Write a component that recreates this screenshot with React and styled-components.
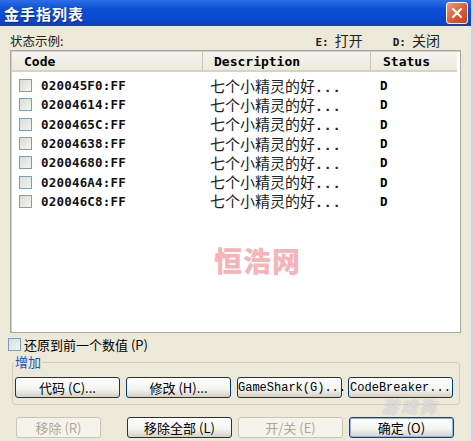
import React from 'react';
import styled, { createGlobalStyle } from 'styled-components';

const Global = createGlobalStyle`
  html, body { margin: 0; padding: 0; background: #ece9d8; }
  * { box-sizing: border-box; }
`;

const Window = styled.div`
  width: 474px;
  height: 441px;
  background: #ece9d8;
  font-family: "Noto Sans CJK SC", "DejaVu Sans", sans-serif;
  font-size: 12px;
  color: #000;
  display: flex;
  flex-direction: column;
  position: relative;
  overflow: hidden;
  border-right: 3px solid #c5d3ee;
`;

const TitleBar = styled.div`
  height: 26px;
  flex: none;
  background: linear-gradient(180deg, #2e6fe6 0%, #0b4fd6 35%, #0a49cf 75%, #0b3fb4 100%);
  display: flex;
  align-items: center;
  justify-content: space-between;
  padding: 0 3px 0 4px;
`;

const Title = styled.span`
  color: #fff;
  font-weight: bold;
  font-size: 15px;
  letter-spacing: 1px;
  text-shadow: 1px 1px 0 #0a2a8a;
`;

const Close = styled.div`
  width: 22px;
  height: 22px;
  border-radius: 3px;
  border: 1px solid #fff;
  background: linear-gradient(135deg, #f09a7c, #d9572f 60%, #c4431f);
  display: flex;
  align-items: center;
  justify-content: center;
`;

const Body = styled.div`
  flex: 1;
  display: flex;
  flex-direction: column;
  padding: 4px 9px 0 8px;
`;

const Legend = styled.div`
  display: flex;
  align-items: baseline;
  height: 20px;
  padding-left: 2px;
  color: #222;
  font-size: 12.5px;
  line-height: 20px;
`;

const LegendItem = styled.span`
  margin-left: ${p => p.$gap}px;
  display: inline-flex;
  align-items: baseline;
  gap: 6px;
  font-size: 14px;
  b { font-family: "DejaVu Sans Mono", monospace; font-size: 11px; }
`;

const ListBox = styled.div`
  height: 283px;
  margin: 0 1px 0 2px;
  background: #fff;
  border: 1px solid #a9a89f;
  box-shadow: inset 1px 1px 0 #d0cfc6;
  display: flex;
  flex-direction: column;
  padding: 1px 3px 0 1px;
`;

const Header = styled.div`
  display: grid;
  grid-template-columns: 191px 168px 1fr;
  height: 20px;
  background: linear-gradient(180deg, #f5f4ee, #ebeadb);
  border-bottom: 2px solid #d6d3c4;
  font-family: "DejaVu Sans Mono", monospace;
  font-weight: bold;
  font-size: 13px;
`;

const HeadCell = styled.div`
  display: flex;
  align-items: center;
  padding-left: ${p => p.$pad}px;
  border-right: ${p => (p.$last ? 'none' : '1px solid #c9c6b6')};
`;

const Rows = styled.div`
  padding-top: 4px;
  display: flex;
  flex-direction: column;
`;

const Row = styled.div`
  display: grid;
  grid-template-columns: 191px 168px 1fr;
  height: 19.3px;
  align-items: center;
`;

const CodeCell = styled.div`
  display: flex;
  align-items: center;
  padding-left: 7px;
  gap: 9px;
  font-family: "DejaVu Sans Mono", monospace;
  font-weight: bold;
  font-size: 12.5px;
  color: #111;
  letter-spacing: 0.2px;
`;

const Box = styled.span`
  width: 13px;
  height: 13px;
  flex: none;
  border: 1px solid #7f9db9;
  background: linear-gradient(135deg, #dcdcd6, #f4f4f0);
`;

const DescCell = styled.div`
  font-size: 15px;
  line-height: 1;
  color: #222;
  white-space: nowrap;
  padding-left: 7px;
  b { font-family: "DejaVu Sans Mono", monospace; font-size: 13px; letter-spacing: 1px; }
`;

const StatusCell = styled.div`
  padding-left: 9px;
  font-family: "DejaVu Sans Mono", monospace;
  font-weight: bold;
  font-size: 12.5px;
`;

const Mark = styled.div`
  position: absolute;
  left: 214px;
  top: 240px;
  color: #f5b5b8;
  font-weight: 900;
  font-size: 28px;
  letter-spacing: 1px;
`;

const Restore = styled.label`
  display: flex;
  align-items: center;
  height: 18px;
  margin-top: 2px;
  gap: 3px;
  font-size: 13px;
`;

const Group = styled.fieldset`
  margin: 2px 2px 0 4px;
  padding: 8px 2px 6px 2px;
  border: 1px solid #d0d0bf;
  border-radius: 3px;
  display: flex;
  gap: 6px;
  legend {
    color: #1a4fcf;
    font-size: 13px;
    padding: 0 1px;
    margin-left: -1px;
    line-height: 14px;
  }
`;

const Btn = styled.button`
  width: ${p => p.$w || 105}px;
  height: 21px;
  padding: 0;
  border: 1px solid ${p => (p.$disabled ? '#c9c7ba' : p.$default ? '#1d3e82' : '#003c74')};
  box-shadow: ${p => (p.$default ? 'inset 0 0 0 1px #8fb0e8' : 'none')};
  border-radius: 3px;
  background: ${p => (p.$disabled ? '#f5f4ea' : 'linear-gradient(180deg, #ffffff 0%, #f3f3ee 60%, #d6d0c5 100%)')};
  color: ${p => (p.$disabled ? '#aca899' : '#000')};
  font-family: ${p => (p.$mono ? '"Liberation Mono", monospace' : '"Noto Sans CJK SC", sans-serif')};
  font-size: ${p => (p.$mono ? 12 : 13)}px;
  line-height: 1;
  white-space: nowrap;
`;

const BottomRow = styled.div`
  display: flex;
  gap: 6px;
  margin-top: 12px;
  padding-left: 8px;
  & > :first-child { margin-right: 20px; }
`;

const Ghost = styled.div`
  position: absolute;
  right: 32px;
  top: 398px;
  font-size: 16px;
  line-height: 17px;
  font-weight: bold;
  font-style: italic;
  letter-spacing: 3px;
  color: rgba(255, 255, 255, 0.65);
  text-shadow: 0 0 1px rgba(110, 110, 110, 0.6);
  pointer-events: none;
`;

const codes = ['020045F0:FF', '02004614:FF', '0200465C:FF', '02004638:FF', '02004680:FF', '020046A4:FF', '020046C8:FF'];

export default function App() {
  return (
    <Window>
      <Global />
      <TitleBar>
        <Title>金手指列表</Title>
        <Close>
          <svg width="12" height="12" viewBox="0 0 12 12">
            <path d="M2 2 L10 10 M10 2 L2 10" stroke="#fff" strokeWidth="2.2" strokeLinecap="round" />
          </svg>
        </Close>
      </TitleBar>
      <Body>
        <Legend>
          <span>状态示例:</span>
          <LegendItem $gap={252}><b>E:</b>打开</LegendItem>
          <LegendItem $gap={30}><b>D:</b>关闭</LegendItem>
        </Legend>
        <ListBox>
          <Header>
            <HeadCell $pad={12}>Code</HeadCell>
            <HeadCell $pad={11}>Description</HeadCell>
            <HeadCell $pad={12} $last>Status</HeadCell>
          </Header>
          <Rows>
            {codes.map(c => (
              <Row key={c}>
                <CodeCell><Box />{c}</CodeCell>
                <DescCell>七个小精灵的好<b>...</b></DescCell>
                <StatusCell>D</StatusCell>
              </Row>
            ))}
          </Rows>
        </ListBox>
        <Restore><Box />还原到前一个数值 (P)</Restore>
        <Group>
          <legend>增加</legend>
          <Btn>代码 (C)...</Btn>
          <Btn>修改 (H)...</Btn>
          <Btn $mono>GameShark(G)...</Btn>
          <Btn $mono>CodeBreaker...</Btn>
        </Group>
        <BottomRow>
          <Btn $w={85} $disabled>移除 (R)</Btn>
          <Btn>移除全部 (L)</Btn>
          <Btn $disabled>开/关 (E)</Btn>
          <Btn $default>确定 (O)</Btn>
        </BottomRow>
      </Body>
      <Mark>恒浩网</Mark>
      <Ghost>游戏狗</Ghost>
    </Window>
  );
}
